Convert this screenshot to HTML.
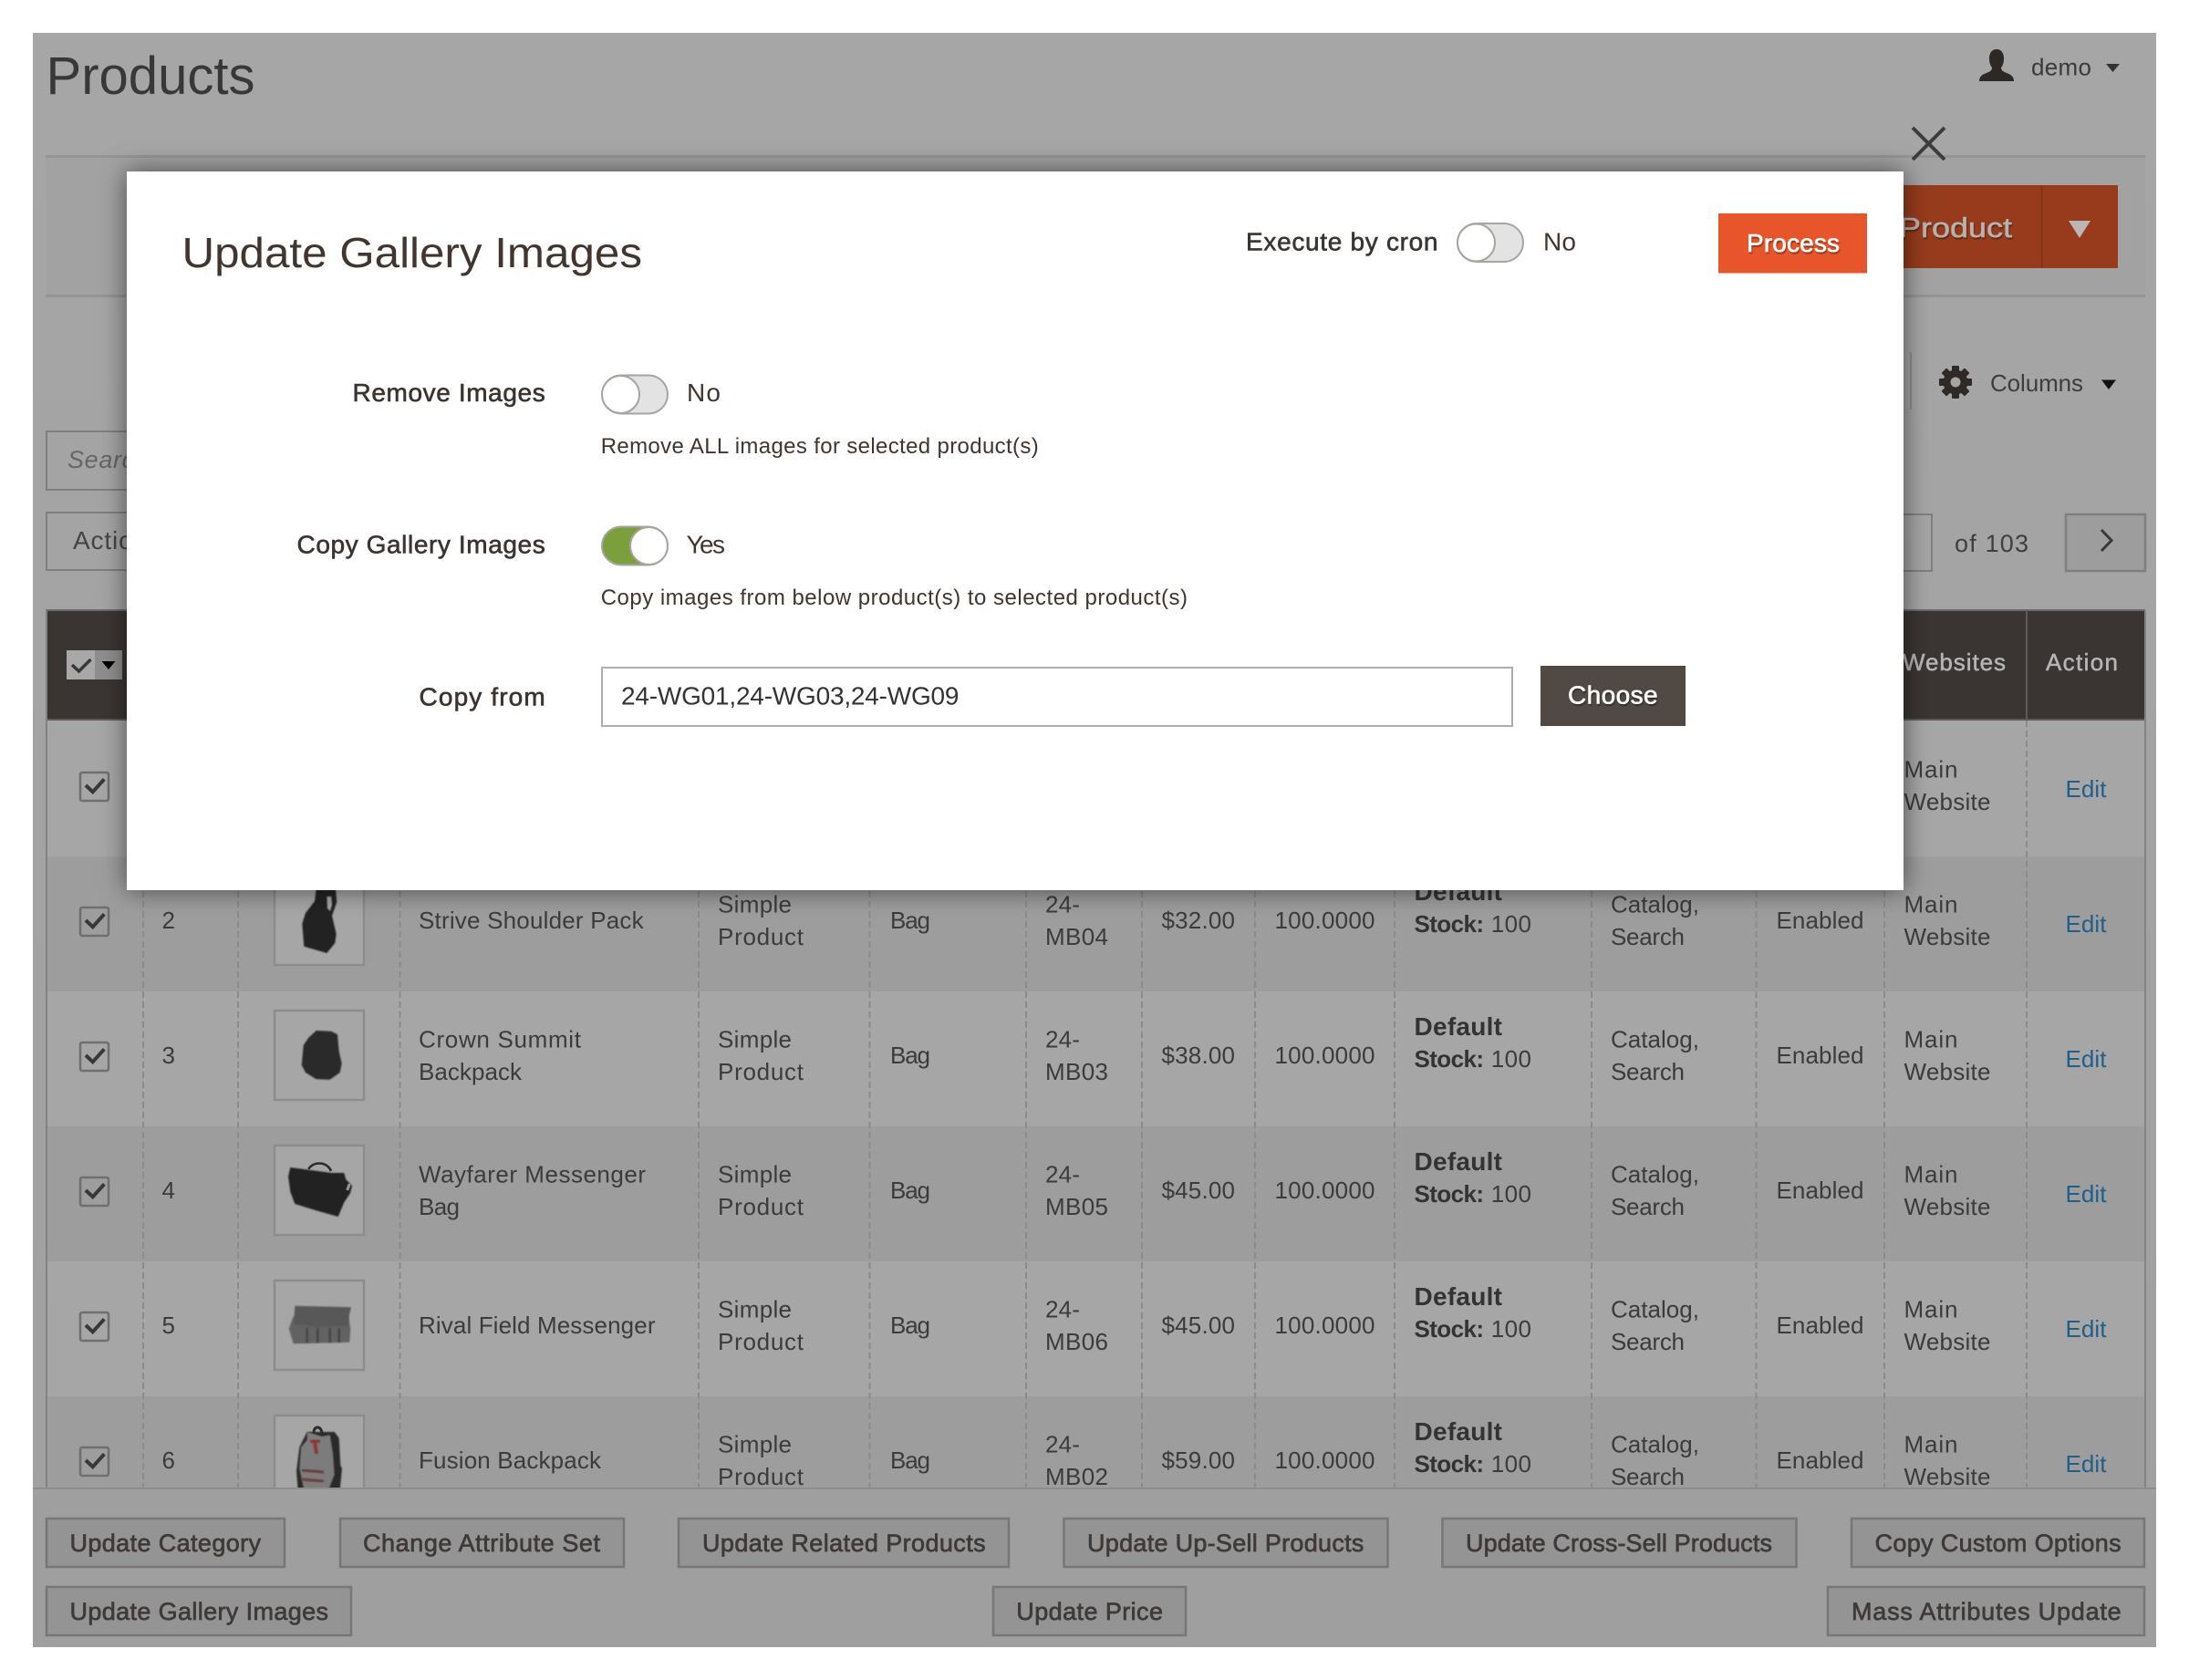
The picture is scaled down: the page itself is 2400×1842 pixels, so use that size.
<!DOCTYPE html>
<html lang="en">
<head>
<meta charset="utf-8">
<title>Products</title>
<style>
html,body{margin:0;padding:0;background:#fff}
svg{display:block;position:absolute;left:0;top:0}
text{font-family:"Liberation Sans",Arial,sans-serif;font-size:26px;fill:#3b3b3b}
.b{font-weight:bold;fill:#333;font-size:28px}
.b2{font-weight:bold;fill:#333;font-size:26px}
.sb{stroke:#3f3a37;stroke-width:.7px;fill:#3f3a37}
.hd{stroke:#b5b5b5;stroke-width:.5px;fill:#b5b5b5;font-size:26px}
.lb{font-size:28px;fill:#3b3431;stroke:#3b3431;stroke-width:.6px}
.md{font-size:28px;fill:#41362f}
.nt{font-size:24px;fill:#41362f}
.ed{fill:#1f5f8a}
.btn{font-size:27px}
.cb{fill:none;stroke:#6f6f6f;stroke-width:2.5}
.ck{fill:none;stroke:#383838;stroke-width:4}
.dv{stroke:#8b8b8b;stroke-width:2;stroke-dasharray:7 4}
.th{fill:#a6a6a6;stroke:#8c8c8c;stroke-width:2.5}
.fb{fill:#949494;stroke:#777;stroke-width:2.5}
.wh{fill:#fff;stroke:#fff;stroke-width:.6px;font-size:28px}
</style>
</head>
<body>
<svg width="2400" height="1842" viewBox="0 0 2400 1842" xmlns="http://www.w3.org/2000/svg">
<defs>
<filter id="sh" x="-10%" y="-15%" width="120%" height="130%"><feDropShadow dx="0" dy="0" stdDeviation="14" flood-color="#000" flood-opacity=".55"/></filter>
<filter id="bl" x="-10%" y="-10%" width="120%" height="120%"><feGaussianBlur stdDeviation=".8"/></filter>
<filter id="ts" x="-5%" y="-20%" width="110%" height="140%"><feDropShadow dx="1" dy="2" stdDeviation=".6" flood-color="#000" flood-opacity=".35"/></filter>
<clipPath id="tc"><rect x="0" y="0" width="2400" height="1632"/></clipPath>
<linearGradient id="bg" x1="0" y1="0" x2="0" y2="1"><stop offset="0" stop-color="#a6a6a6"/><stop offset="1" stop-color="#a0a0a0"/></linearGradient>
</defs>

<!-- page under overlay -->
<rect x="36" y="36" width="2328" height="1770" fill="url(#bg)"/>
<text x="50.500" y="103" style="font-size:58px;fill:#3a3836" textLength="229" lengthAdjust="spacingAndGlyphs">Products</text>

<path fill="#2c2826" d="M2170 89c0-5 3-7 8-9 4-1.500 6-3 6-6-2-2-3-6-3-10 0-6 3-10 8-10s8 4 8 10c0 4-1 8-3 10 0 3 2 4.500 6 6 5 2 8 4 8 9z"/>
<text x="2227" y="82.500" textLength="66" style="fill:#3a3a3a">demo</text>
<path d="M2309 70h15l-7.500 9z" fill="#333"/>

<!-- action bar -->
<rect x="50" y="171" width="2302" height="154" fill="#a2a2a2"/>
<rect x="50" y="170" width="2302" height="3" fill="#949494"/>
<rect x="50" y="323" width="2302" height="3" fill="#949494"/>
<rect x="2000" y="203" width="322" height="91" fill="#973b1c"/>
<rect x="2238" y="203" width="1.500" height="91" fill="#7f3015"/>
<text x="2082" y="260" textLength="124" lengthAdjust="spacingAndGlyphs" class="hd" style="font-size:31px;fill:#b7b2ae;stroke:#b7b2ae" filter="url(#ts)">Product</text>
<path d="M2268 242h24l-12 19z" fill="#b9b6b4"/>

<!-- close X -->
<path d="M2097 140l35 35M2132 140l-35 35" stroke="#3c3c3c" stroke-width="4" fill="none"/>

<!-- search -->
<rect x="51" y="473" width="400" height="64" fill="none" stroke="#7f7f7f" stroke-width="2"/>
<text x="74" y="513" style="font-size:27px;font-style:italic;fill:#666" textLength="240">Search by keyword</text>
<rect x="51" y="562" width="300" height="63" fill="none" stroke="#7f7f7f" stroke-width="2"/>
<text x="80" y="602" style="font-size:28px;fill:#444" textLength="97">Actions</text>

<!-- columns -->
<rect x="2094" y="386" width="2" height="63" fill="#8e8e8e"/>
<g transform="translate(2144 419)" fill="#2f2a27">
<circle r="13.500"/>
<rect x="-4" y="-18" width="8" height="36" rx="1"/>
<rect x="-4" y="-18" width="8" height="36" rx="1" transform="rotate(45)"/>
<rect x="-4" y="-18" width="8" height="36" rx="1" transform="rotate(90)"/>
<rect x="-4" y="-18" width="8" height="36" rx="1" transform="rotate(135)"/>
<circle r="5.500" fill="#a5a5a5"/>
</g>
<text x="2182" y="429" textLength="102" style="fill:#3d3d3d">Columns</text>
<path d="M2304 416.500h16l-8 10.500z" fill="#111"/>

<!-- pager -->
<rect x="2000" y="564" width="118" height="62" fill="none" stroke="#7f7f7f" stroke-width="2"/>
<text x="2143" y="605" textLength="81" style="fill:#3f3f3f;font-size:27px">of 103</text>
<rect x="2265" y="564" width="87" height="62" fill="#9d9d9d" stroke="#7f7f7f" stroke-width="2.500"/>
<path d="M2304 581l11 11.500-11 11.500" fill="none" stroke="#383838" stroke-width="3"/>

<!-- table -->
<g clip-path="url(#tc)">
<rect x="50" y="790" width="2302" height="149.500" fill="#a6a6a6"/>
<rect x="50" y="939.500" width="2302" height="147.500" fill="#9d9d9d"/>
<rect x="50" y="1087" width="2302" height="148" fill="#a6a6a6"/>
<rect x="50" y="1235" width="2302" height="148" fill="#9d9d9d"/>
<rect x="50" y="1383" width="2302" height="148" fill="#a6a6a6"/>
<rect x="50" y="1531" width="2302" height="101" fill="#9d9d9d"/>
<rect x="50" y="669" width="2302" height="121" fill="#3a3532"/>
<rect x="50" y="668" width="2302" height="2" fill="#6a6a6a"/>
<rect x="50" y="788" width="2302" height="2" fill="#5d5a58"/>
<rect x="50" y="669" width="2" height="963" fill="#828282"/>
<rect x="2351" y="669" width="2" height="963" fill="#828282"/>
<rect x="2221" y="669" width="2" height="121" fill="#5d5a58"/>

<path class="dv" d="M157 790V1632M261 790V1632M438.500 790V1632M766 790V1632M953.500 790V1632M1125 790V1632M1252 790V1632M1376 790V1632M1529 790V1632M1745 790V1632M1925.500 790V1632M2066 790V1632M2222 790V1632"/>

<!-- header -->
<rect x="73" y="713" width="31" height="32" fill="#a8a8a8"/>
<rect x="104" y="713" width="30" height="32" fill="#8e8e8e"/>
<path d="M79 729l7.500 7 13-13" class="ck" style="stroke-width:3.500"/>
<path d="M111.500 725h15l-7.500 9z" fill="#000"/>
<text x="2086" y="735" class="hd" textLength="113">Websites</text>
<text x="2243" y="735" class="hd" textLength="79">Action</text>

<!-- row 1 -->
<g transform="translate(0,-296)">
<rect x="88" y="1143" width="31" height="31" rx="2" class="cb"/>
<path d="M94 1157l7.700 7.300 12.600-14" class="ck"/>
<text x="2087.500" y="1148.500" textLength="59">Main</text><text x="2087.500" y="1184" textLength="95">Website</text>
<text x="2264.500" y="1170" class="ed" textLength="45">Edit</text>
</g>

<!-- row 2 -->
<g transform="translate(0,-148)">
<rect x="88" y="1143" width="31" height="31" rx="2" class="cb"/>
<path d="M94 1157l7.700 7.300 12.600-14" class="ck"/>
<text x="177.500" y="1166">2</text>
<rect x="301" y="1108" width="98" height="98" class="th"/>
<path filter="url(#bl)" fill="#242424" d="M348.300 1110L366.700 1110 369.300 1137 364 1152 368.700 1172 367.300 1182 358.300 1193 333.300 1185.700 331.300 1160.700 335 1149 345 1136z"/>
<path filter="url(#bl)" fill="#a6a6a6" d="M358.300 1131l5 0 .7 9-2 7-3-3z"/>
<text x="459" y="1166" textLength="246.600">Strive Shoulder Pack</text>
<text x="787" y="1148.500" textLength="81">Simple</text><text x="787" y="1184" textLength="94">Product</text>
<text x="976" y="1166" textLength="44">Bag</text>
<text x="1146" y="1148.500" textLength="38">24-</text><text x="1146" y="1184" textLength="69">MB04</text>
<text x="1273.500" y="1166" textLength="80.500">$32.00</text>
<text x="1397.500" y="1166" textLength="110">100.0000</text>
<text x="1550.500" y="1135" class="b" textLength="96.500">Default</text>
<text x="1550.500" y="1170" class="b2" textLength="76.500">Stock:</text><text x="1634.700" y="1170" textLength="44.300">100</text>
<text x="1766" y="1148.500" textLength="97">Catalog,</text><text x="1766" y="1184" textLength="81">Search</text>
<text x="1947.500" y="1166" textLength="96">Enabled</text>
<text x="2087.500" y="1148.500" textLength="59">Main</text><text x="2087.500" y="1184" textLength="95">Website</text>
<text x="2264.500" y="1170" class="ed" textLength="45">Edit</text>
</g>

<!-- row 3 -->
<g>
<rect x="88" y="1143" width="31" height="31" rx="2" class="cb"/>
<path d="M94 1157l7.700 7.300 12.600-14" class="ck"/>
<text x="177.500" y="1166">3</text>
<rect x="301" y="1108" width="98" height="98" class="th"/>
<path filter="url(#bl)" fill="#2c2c2c" d="M346.700 1130L363.300 1130.700 370 1134.300 371.700 1152.700 374.700 1166 372.700 1176 361.700 1183.700 346.700 1183.300 335 1176 330.700 1167.700 332.700 1146 338.300 1137.700z"/>
<text x="459" y="1148.500" textLength="178">Crown Summit</text><text x="459" y="1184" textLength="113">Backpack</text>
<text x="787" y="1148.500" textLength="81">Simple</text><text x="787" y="1184" textLength="94">Product</text>
<text x="976" y="1166" textLength="44">Bag</text>
<text x="1146" y="1148.500" textLength="38">24-</text><text x="1146" y="1184" textLength="69">MB03</text>
<text x="1273.500" y="1166" textLength="80.500">$38.00</text>
<text x="1397.500" y="1166" textLength="110">100.0000</text>
<text x="1550.500" y="1135" class="b" textLength="96.500">Default</text>
<text x="1550.500" y="1170" class="b2" textLength="76.500">Stock:</text><text x="1634.700" y="1170" textLength="44.300">100</text>
<text x="1766" y="1148.500" textLength="97">Catalog,</text><text x="1766" y="1184" textLength="81">Search</text>
<text x="1947.500" y="1166" textLength="96">Enabled</text>
<text x="2087.500" y="1148.500" textLength="59">Main</text><text x="2087.500" y="1184" textLength="95">Website</text>
<text x="2264.500" y="1170" class="ed" textLength="45">Edit</text>
</g>

<!-- row 4 -->
<g transform="translate(0,148)">
<rect x="88" y="1143" width="31" height="31" rx="2" class="cb"/>
<path d="M94 1157l7.700 7.300 12.600-14" class="ck"/>
<text x="177.500" y="1166">4</text>
<rect x="301" y="1108" width="98" height="98" class="th"/>
<path filter="url(#bl)" fill="#222" d="M318.300 1132L363.300 1138 377.300 1138 379.300 1145.300 386 1152 384 1160.300 377.300 1170.300 370.700 1186 346.700 1179.300 323.300 1172 318.300 1158.700 316 1142z"/>
<path d="M338.300 1134C342 1126 358 1124 363 1136" fill="none" stroke="#2a2a2a" stroke-width="2.500"/>
<path d="M380.700 1157L383.300 1150" fill="none" stroke="#999" stroke-width="3"/>
<text x="459" y="1148.500" textLength="249">Wayfarer Messenger</text><text x="459" y="1184" textLength="45">Bag</text>
<text x="787" y="1148.500" textLength="81">Simple</text><text x="787" y="1184" textLength="94">Product</text>
<text x="976" y="1166" textLength="44">Bag</text>
<text x="1146" y="1148.500" textLength="38">24-</text><text x="1146" y="1184" textLength="69">MB05</text>
<text x="1273.500" y="1166" textLength="80.500">$45.00</text>
<text x="1397.500" y="1166" textLength="110">100.0000</text>
<text x="1550.500" y="1135" class="b" textLength="96.500">Default</text>
<text x="1550.500" y="1170" class="b2" textLength="76.500">Stock:</text><text x="1634.700" y="1170" textLength="44.300">100</text>
<text x="1766" y="1148.500" textLength="97">Catalog,</text><text x="1766" y="1184" textLength="81">Search</text>
<text x="1947.500" y="1166" textLength="96">Enabled</text>
<text x="2087.500" y="1148.500" textLength="59">Main</text><text x="2087.500" y="1184" textLength="95">Website</text>
<text x="2264.500" y="1170" class="ed" textLength="45">Edit</text>
</g>

<!-- row 5 -->
<g transform="translate(0,296)">
<rect x="88" y="1143" width="31" height="31" rx="2" class="cb"/>
<path d="M94 1157l7.700 7.300 12.600-14" class="ck"/>
<text x="177.500" y="1166">5</text>
<rect x="301" y="1108" width="98" height="98" class="th"/>
<path filter="url(#bl)" fill="#626262" d="M321.700 1147.300L316.700 1160.700 321.700 1177.300 383.300 1175.700 384.300 1160.700 382 1147.300z"/>
<path filter="url(#bl)" fill="#595959" d="M323.300 1135.700L385 1137.300 382.700 1147.300 381.700 1158 350 1159 322 1156z"/>
<path filter="url(#bl)" fill="none" stroke="#454545" stroke-width="2.500" d="M336.700 1160V1176M348.300 1160V1176M361.700 1160V1176M371.700 1160V1176"/>
<text x="459" y="1166" textLength="259.500">Rival Field Messenger</text>
<text x="787" y="1148.500" textLength="81">Simple</text><text x="787" y="1184" textLength="94">Product</text>
<text x="976" y="1166" textLength="44">Bag</text>
<text x="1146" y="1148.500" textLength="38">24-</text><text x="1146" y="1184" textLength="69">MB06</text>
<text x="1273.500" y="1166" textLength="80.500">$45.00</text>
<text x="1397.500" y="1166" textLength="110">100.0000</text>
<text x="1550.500" y="1135" class="b" textLength="96.500">Default</text>
<text x="1550.500" y="1170" class="b2" textLength="76.500">Stock:</text><text x="1634.700" y="1170" textLength="44.300">100</text>
<text x="1766" y="1148.500" textLength="97">Catalog,</text><text x="1766" y="1184" textLength="81">Search</text>
<text x="1947.500" y="1166" textLength="96">Enabled</text>
<text x="2087.500" y="1148.500" textLength="59">Main</text><text x="2087.500" y="1184" textLength="95">Website</text>
<text x="2264.500" y="1170" class="ed" textLength="45">Edit</text>
</g>

<!-- row 6 -->
<g transform="translate(0,444)">
<rect x="88" y="1143" width="31" height="31" rx="2" class="cb"/>
<path d="M94 1157l7.700 7.300 12.600-14" class="ck"/>
<text x="177.500" y="1166">6</text>
<rect x="301" y="1108" width="98" height="98" class="th"/>
<path filter="url(#bl)" fill="#2b2b2b" d="M336.700 1126L366.700 1126 371.700 1132.700 373.300 1162.700 375 1166 372.700 1190 326.700 1190 325 1169.300 328.300 1142.700 333.300 1132.700z"/>
<path filter="url(#bl)" fill="#7b7b7b" d="M336.700 1126L353.300 1131 361.700 1129.300 365 1149.300 366.700 1172.700 360 1190 333.300 1190 328.300 1166 330 1142.700 336.700 1134.700z"/>
<path d="M344 1127c0-8 8-8 9 0" fill="none" stroke="#2b2b2b" stroke-width="3"/>
<path filter="url(#bl)" fill="none" stroke="#8c3838" stroke-width="4" d="M340 1136h11M345 1136l2 14"/>
<path filter="url(#bl)" fill="none" stroke="#6f3a3a" stroke-width="3" d="M331 1168l24 2M331 1178l24 2"/>
<text x="459" y="1166" textLength="200">Fusion Backpack</text>
<text x="787" y="1148.500" textLength="81">Simple</text><text x="787" y="1184" textLength="94">Product</text>
<text x="976" y="1166" textLength="44">Bag</text>
<text x="1146" y="1148.500" textLength="38">24-</text><text x="1146" y="1184" textLength="69">MB02</text>
<text x="1273.500" y="1166" textLength="80.500">$59.00</text>
<text x="1397.500" y="1166" textLength="110">100.0000</text>
<text x="1550.500" y="1135" class="b" textLength="96.500">Default</text>
<text x="1550.500" y="1170" class="b2" textLength="76.500">Stock:</text><text x="1634.700" y="1170" textLength="44.300">100</text>
<text x="1766" y="1148.500" textLength="97">Catalog,</text><text x="1766" y="1184" textLength="81">Search</text>
<text x="1947.500" y="1166" textLength="96">Enabled</text>
<text x="2087.500" y="1148.500" textLength="59">Main</text><text x="2087.500" y="1184" textLength="95">Website</text>
<text x="2264.500" y="1170" class="ed" textLength="45">Edit</text>
</g>
</g>

<!-- footer -->
<rect x="36" y="1632" width="2328" height="174" fill="#9f9f9f"/>
<rect x="36" y="1631" width="2328" height="2" fill="#8d8d8d"/>
<g>
<rect x="51" y="1665" width="261" height="53" class="fb"/><text x="76.500" y="1701" class="btn sb" textLength="209.500">Update Category</text>
<rect x="373" y="1665" width="311" height="53" class="fb"/><text x="398" y="1701" class="btn sb" textLength="260">Change Attribute Set</text>
<rect x="744" y="1665" width="362" height="53" class="fb"/><text x="770" y="1701" class="btn sb" textLength="310.600">Update Related Products</text>
<rect x="1166.500" y="1665" width="355" height="53" class="fb"/><text x="1192" y="1701" class="btn sb" textLength="303.400">Update Up-Sell Products</text>
<rect x="1581.500" y="1665" width="388" height="53" class="fb"/><text x="1607" y="1701" class="btn sb" textLength="336">Update Cross-Sell Products</text>
<rect x="2030" y="1665" width="321" height="53" class="fb"/><text x="2055.600" y="1701" class="btn sb" textLength="270">Copy Custom Options</text>
<rect x="51" y="1740" width="334" height="53" class="fb"/><text x="76.500" y="1776" class="btn sb" textLength="283.500">Update Gallery Images</text>
<rect x="1089" y="1740" width="211" height="53" class="fb"/><text x="1114.300" y="1776" class="btn sb" textLength="160.700">Update Price</text>
<rect x="2004" y="1740" width="347" height="53" class="fb"/><text x="2030" y="1776" class="btn sb" textLength="295.700">Mass Attributes Update</text>
</g>

<!-- modal -->
<rect x="139" y="188" width="1948" height="788" fill="#fff" filter="url(#sh)"/>
<text x="199.500" y="293" style="font-size:46px;fill:#41362f" textLength="504.500" lengthAdjust="spacingAndGlyphs">Update Gallery Images</text>

<text x="1366" y="274.500" class="lb" textLength="210.500">Execute by cron</text>
<rect x="1598" y="245" width="72" height="42" rx="21" fill="#e3e3e3" stroke="#a8a5a0" stroke-width="2"/>
<circle cx="1618.500" cy="266" r="20.500" fill="#fff" stroke="#a8a5a0" stroke-width="2"/>
<text x="1692" y="274.500" class="md" textLength="36">No</text>
<rect x="1884" y="234" width="163" height="65.500" fill="#e8552a"/>
<text x="1915" y="276" class="wh" textLength="102" filter="url(#ts)">Process</text>

<text x="386.500" y="440" class="lb" textLength="211.200">Remove Images</text>
<rect x="660" y="411.500" width="72" height="42" rx="21" fill="#e3e3e3" stroke="#a8a5a0" stroke-width="2"/>
<circle cx="680.500" cy="432.500" r="20.500" fill="#fff" stroke="#a8a5a0" stroke-width="2"/>
<text x="753" y="440" class="md" textLength="37">No</text>
<text x="658.700" y="497" class="nt" textLength="480">Remove ALL images for selected product(s)</text>

<text x="325.500" y="606.500" class="lb" textLength="272.200">Copy Gallery Images</text>
<rect x="660" y="577.500" width="72" height="42" rx="21" fill="#7c9f3e" stroke="#a8a5a0" stroke-width="2"/>
<circle cx="711.500" cy="598.500" r="20.500" fill="#fff" stroke="#a8a5a0" stroke-width="2"/>
<text x="752.500" y="606.500" class="md" textLength="42.500">Yes</text>
<text x="658.700" y="663" class="nt" textLength="643.300">Copy images from below product(s) to selected product(s)</text>

<text x="459.500" y="773.500" class="lb" textLength="138.200">Copy from</text>
<rect x="660" y="732" width="998" height="64" fill="#fff" stroke="#adadad" stroke-width="2"/>
<text x="681" y="772.500" class="md" textLength="370.500" style="fill:#333">24-WG01,24-WG03,24-WG09</text>
<rect x="1689" y="730" width="159" height="66" fill="#514943"/>
<text x="1719" y="771.500" class="wh" textLength="98.600" filter="url(#ts)">Choose</text>
</svg>
</body>
</html>
